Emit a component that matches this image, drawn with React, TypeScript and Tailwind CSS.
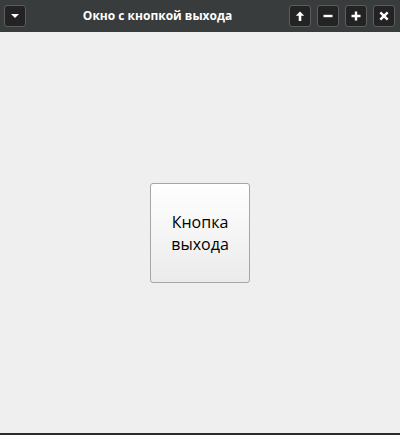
import React from "react";

const TitleButton = ({ children }: { children: React.ReactNode }) => (
  <div className="flex h-[22px] w-[22px] items-center justify-center rounded-[3px] border border-[#5c5e5e] bg-[#232323] text-white">
    {children}
  </div>
);

export default function App() {
  return (
    <div className="flex h-[435px] w-[400px] flex-col bg-[#efefef] font-['Open_Sans',sans-serif]">
      <div className="flex h-[32px] items-center bg-[#393c3c] px-[4px]">
        <TitleButton>
          <svg width="10" height="6" viewBox="0 0 10 6">
            <path d="M1 1h8L5 5z" fill="white" />
          </svg>
        </TitleButton>
        <div className="flex-1 text-center text-[12px] font-bold text-white">
          Окно с кнопкой выхода
        </div>
        <div className="flex gap-[6px] pr-[1px]">
          <TitleButton>
            <svg width="12" height="12" viewBox="0 0 12 12">
              <path d="M6 1.5L1.8 5.7h2.9V11h2.6V5.7h2.9z" fill="white" />
            </svg>
          </TitleButton>
          <TitleButton>
            <svg width="12" height="12" viewBox="0 0 12 12">
              <rect x="1.5" y="4.8" width="9" height="2.4" fill="white" />
            </svg>
          </TitleButton>
          <TitleButton>
            <svg width="12" height="12" viewBox="0 0 12 12">
              <path d="M4.8 1.5h2.4v3.3h3.3v2.4H7.2v3.3H4.8V7.2H1.5V4.8h3.3z" fill="white" />
            </svg>
          </TitleButton>
          <TitleButton>
            <svg width="12" height="12" viewBox="0 0 12 12">
              <path d="M2.3 2.3l7.4 7.4M9.7 2.3L2.3 9.7" stroke="white" strokeWidth="2.4" />
            </svg>
          </TitleButton>
        </div>
      </div>
      <div className="flex flex-1 items-center justify-center">
        <button className="flex h-[100px] w-[100px] items-center justify-center rounded-[3px] border border-[#a6a6a6] bg-gradient-to-b from-white to-[#ebebeb] text-[16px] leading-[22px] text-black">
          Кнопка
          <br />
          выхода
        </button>
      </div>
      <div className="h-[2px] bg-[#2b2b2b]" />
    </div>
  );
}
